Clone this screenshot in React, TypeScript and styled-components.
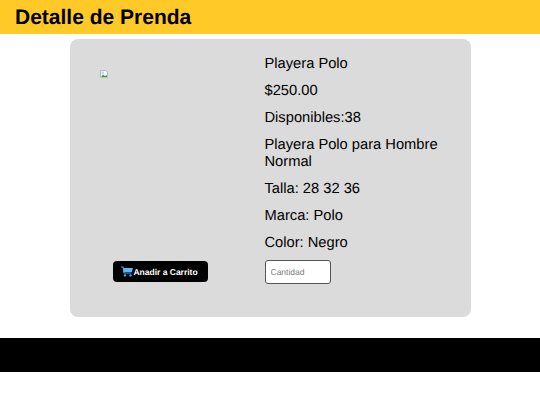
import { createGlobalStyle } from "styled-components";
import styled from "styled-components";

const GlobalStyle = createGlobalStyle`
  html, body {
    margin: 0;
    padding: 0;
    background: #fff;
    font-family: "Liberation Sans", Arial, sans-serif;
    color: #000;
    text-rendering: geometricPrecision;
  }
`;

const Header = styled.header`
  height: 34px;
  background: #ffca28;
  padding-left: 15px;
  display: flex;
  align-items: center;
`;

const Title = styled.h1`
  margin: 0;
  padding-top: 2px;
  font-size: 21px;
  font-weight: 700;
  line-height: 32px;
`;

const Main = styled.main`
  padding: 5px 0 21px;
  display: flex;
  justify-content: center;
`;

const Card = styled.section`
  width: 401px;
  height: 278px;
  box-sizing: border-box;
  background: #dbdbdb;
  border-radius: 8px;
  padding: 16px 0 0 0;
  display: grid;
  grid-template-columns: 195px 1fr;
`;

const Left = styled.div`
  display: flex;
  flex-direction: column;
`;

const Picture = styled.div`
  margin: 15px 0 0 30px;
  width: 8px;
  flex: 1;

  svg {
    display: block;
  }
`;

const BuyButton = styled.button`
  align-self: flex-start;
  margin: 0 0 35px 43px;
  width: 95px;
  height: 21px;
  border: 0;
  border-radius: 4px;
  background: #000;
  color: #fff;
  font-family: "Liberation Sans", Arial, sans-serif;
  font-size: 8.5px;
  font-weight: 700;
  text-rendering: geometricPrecision;
  display: flex;
  align-items: center;
  justify-content: center;
  padding: 0 1px 0 0;
`;

const Info = styled.div`
  display: flex;
  flex-direction: column;
  width: 190px;
  padding-top: 1px;
`;

const Line = styled.p`
  margin: 0 0 10px;
  font-size: 14.7px;
  line-height: 17px;
`;

const Quantity = styled.input`
  width: 66px;
  height: 24px;
  box-sizing: border-box;
  margin-top: -2px;
  border: 1px solid #555;
  border-radius: 3px;
  background: #fff;
  padding: 0 5px;
  font-family: "Liberation Sans", Arial, sans-serif;
  font-size: 8.5px;
  text-rendering: geometricPrecision;
  &::placeholder {
    color: #808080;
  }
`;

const Footer = styled.footer`
  height: 34px;
  background: #000;
`;

function BrokenImage() {
  return (
    <svg width="8" height="8" viewBox="0 0 8 8">
      <path d="M0.5 0.5H5.5L7.5 2.5V7.5H0.5Z" fill="#f4f7fb" stroke="#b5bcc4" />
      <path d="M1 7L3 4.5L5 6L7 5V7Z" fill="#4f9e45" />
      <rect x="1.5" y="1.5" width="2.5" height="2" fill="#b9d3f2" />
    </svg>
  );
}

function CartIcon() {
  return (
    <svg width="12" height="11" viewBox="0 0 12 11">
      <path d="M0 1H2L3 7H10.5" fill="none" stroke="#3fa9f5" strokeWidth="1.2" />
      <path d="M2.4 2H12L10.8 6H3Z" fill="#5cb8f0" />
      <circle cx="4" cy="9.4" r="1.2" fill="#3fa9f5" />
      <circle cx="9.5" cy="9.4" r="1.2" fill="#3fa9f5" />
    </svg>
  );
}

export default function App() {
  return (
    <>
      <GlobalStyle />
      <Header>
        <Title>Detalle de Prenda</Title>
      </Header>
      <Main>
        <Card>
          <Left>
            <Picture>
              <BrokenImage />
            </Picture>
            <BuyButton>
              <CartIcon />
              Anadir a Carrito
            </BuyButton>
          </Left>
          <Info>
            <Line>Playera Polo</Line>
            <Line>$250.00</Line>
            <Line>Disponibles:38</Line>
            <Line>Playera Polo para Hombre Normal</Line>
            <Line>Talla: 28 32 36</Line>
            <Line>Marca: Polo</Line>
            <Line>Color: Negro</Line>
            <Quantity placeholder="Cantidad" />
          </Info>
        </Card>
      </Main>
      <Footer />
    </>
  );
}
